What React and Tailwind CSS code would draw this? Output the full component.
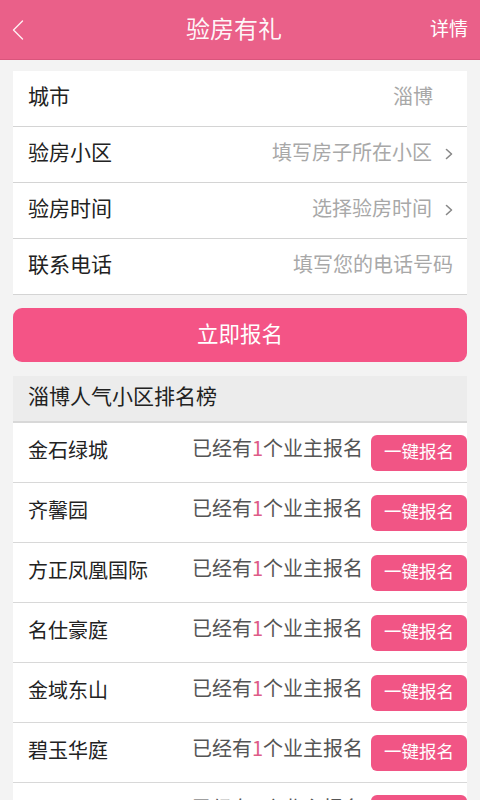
import React from 'react';

const FONT = { fontFamily: '"Noto Sans CJK SC", "Noto Sans", sans-serif' };

const formRows = [
    { label: '城市', value: '淄博', arrow: false },
    { label: '验房小区', value: '填写房子所在小区', arrow: true },
    { label: '验房时间', value: '选择验房时间', arrow: true },
    { label: '联系电话', value: '填写您的电话号码', arrow: false, input: true },
];

const communities = ['金石绿城', '齐馨园', '方正凤凰国际', '名仕豪庭', '金域东山', '碧玉华庭', '鑫城花园'];

function Chevron({ className }) {
    return (
        <svg viewBox="0 0 8 12" className={className} fill="none" stroke="currentColor" strokeWidth="1.6" strokeLinecap="round" strokeLinejoin="round">
            <path d="M1.5 1.5 L6.5 6 L1.5 10.5" />
        </svg>
    );
}

export default function App() {
    return (
        <div className="w-[480px] h-[800px] overflow-hidden bg-[#f3f3f3]" style={FONT}>
            {/* Header */}
            <div className="h-[60px] bg-[#ea6089] flex items-center justify-between px-3 text-white border-b border-[#d9557c]">
                <svg viewBox="0 0 12 20" className="w-[12px] h-[20px] text-white/90" fill="none" stroke="currentColor" strokeWidth="1.4" strokeLinecap="round" strokeLinejoin="round">
                    <path d="M10.5 1 L1.5 10 L10.5 19" />
                </svg>
                <h1 className="text-[24px] leading-none text-white/95 ml-[14px] -mt-[4px]">验房有礼</h1>
                <span className="text-[19px] leading-none -mt-[4px]">详情</span>
            </div>

            {/* Form */}
            <div className="mx-[13px] mt-[11px] bg-white">
                {formRows.map((row) => (
                    <div key={row.label} className="h-[56px] flex items-center justify-between pl-[15px] pr-[14px] pb-[5px] border-b border-[#d4d4d4]">
                        <span className="text-[21px] text-[#222]">{row.label}</span>
                        <div className="flex items-center gap-[13px]">
                            <span className={`text-[20px] text-[#a8a8a8] ${row.arrow || row.input ? '' : 'mr-[20px]'}`}>{row.value}</span>
                            {row.arrow && <Chevron className="w-[8px] h-[12px] text-[#888] mt-[3px]" />}
                        </div>
                    </div>
                ))}
            </div>

            {/* Submit */}
            <button className="mx-[13px] mt-[13px] w-[454px] h-[54px] rounded-[9px] bg-[#f45486] text-white text-[21.5px] flex items-center justify-center pb-[4px]">
                立即报名
            </button>

            {/* Ranking */}
            <div className="mx-[13px] mt-[14px] bg-white">
                <div className="h-[47px] bg-[#ececec] flex items-center pl-[15px] pb-[6px] text-[21px] text-[#222] border-b-2 border-[#d8d8d8]">
                    淄博人气小区排名榜
                </div>
                {communities.map((name) => (
                    <div key={name} className="h-[60px] flex items-center justify-between pl-[15px] border-b border-[#d8d8d8]">
                        <span className="text-[20px] text-[#222] -mt-[6px]">{name}</span>
                        <div className="flex items-center gap-[8px]">
                            <span className="text-[20px] text-[#555] -mt-[10px]">
                                已经有<span className="text-[#de5c88]">1</span>个业主报名
                            </span>
                            <button className="w-[96px] h-[36px] rounded-[6px] bg-[#f15585] text-white text-[17.5px] flex items-center justify-center pb-[3px]">
                                一键报名
                            </button>
                        </div>
                    </div>
                ))}
            </div>
        </div>
    );
}
